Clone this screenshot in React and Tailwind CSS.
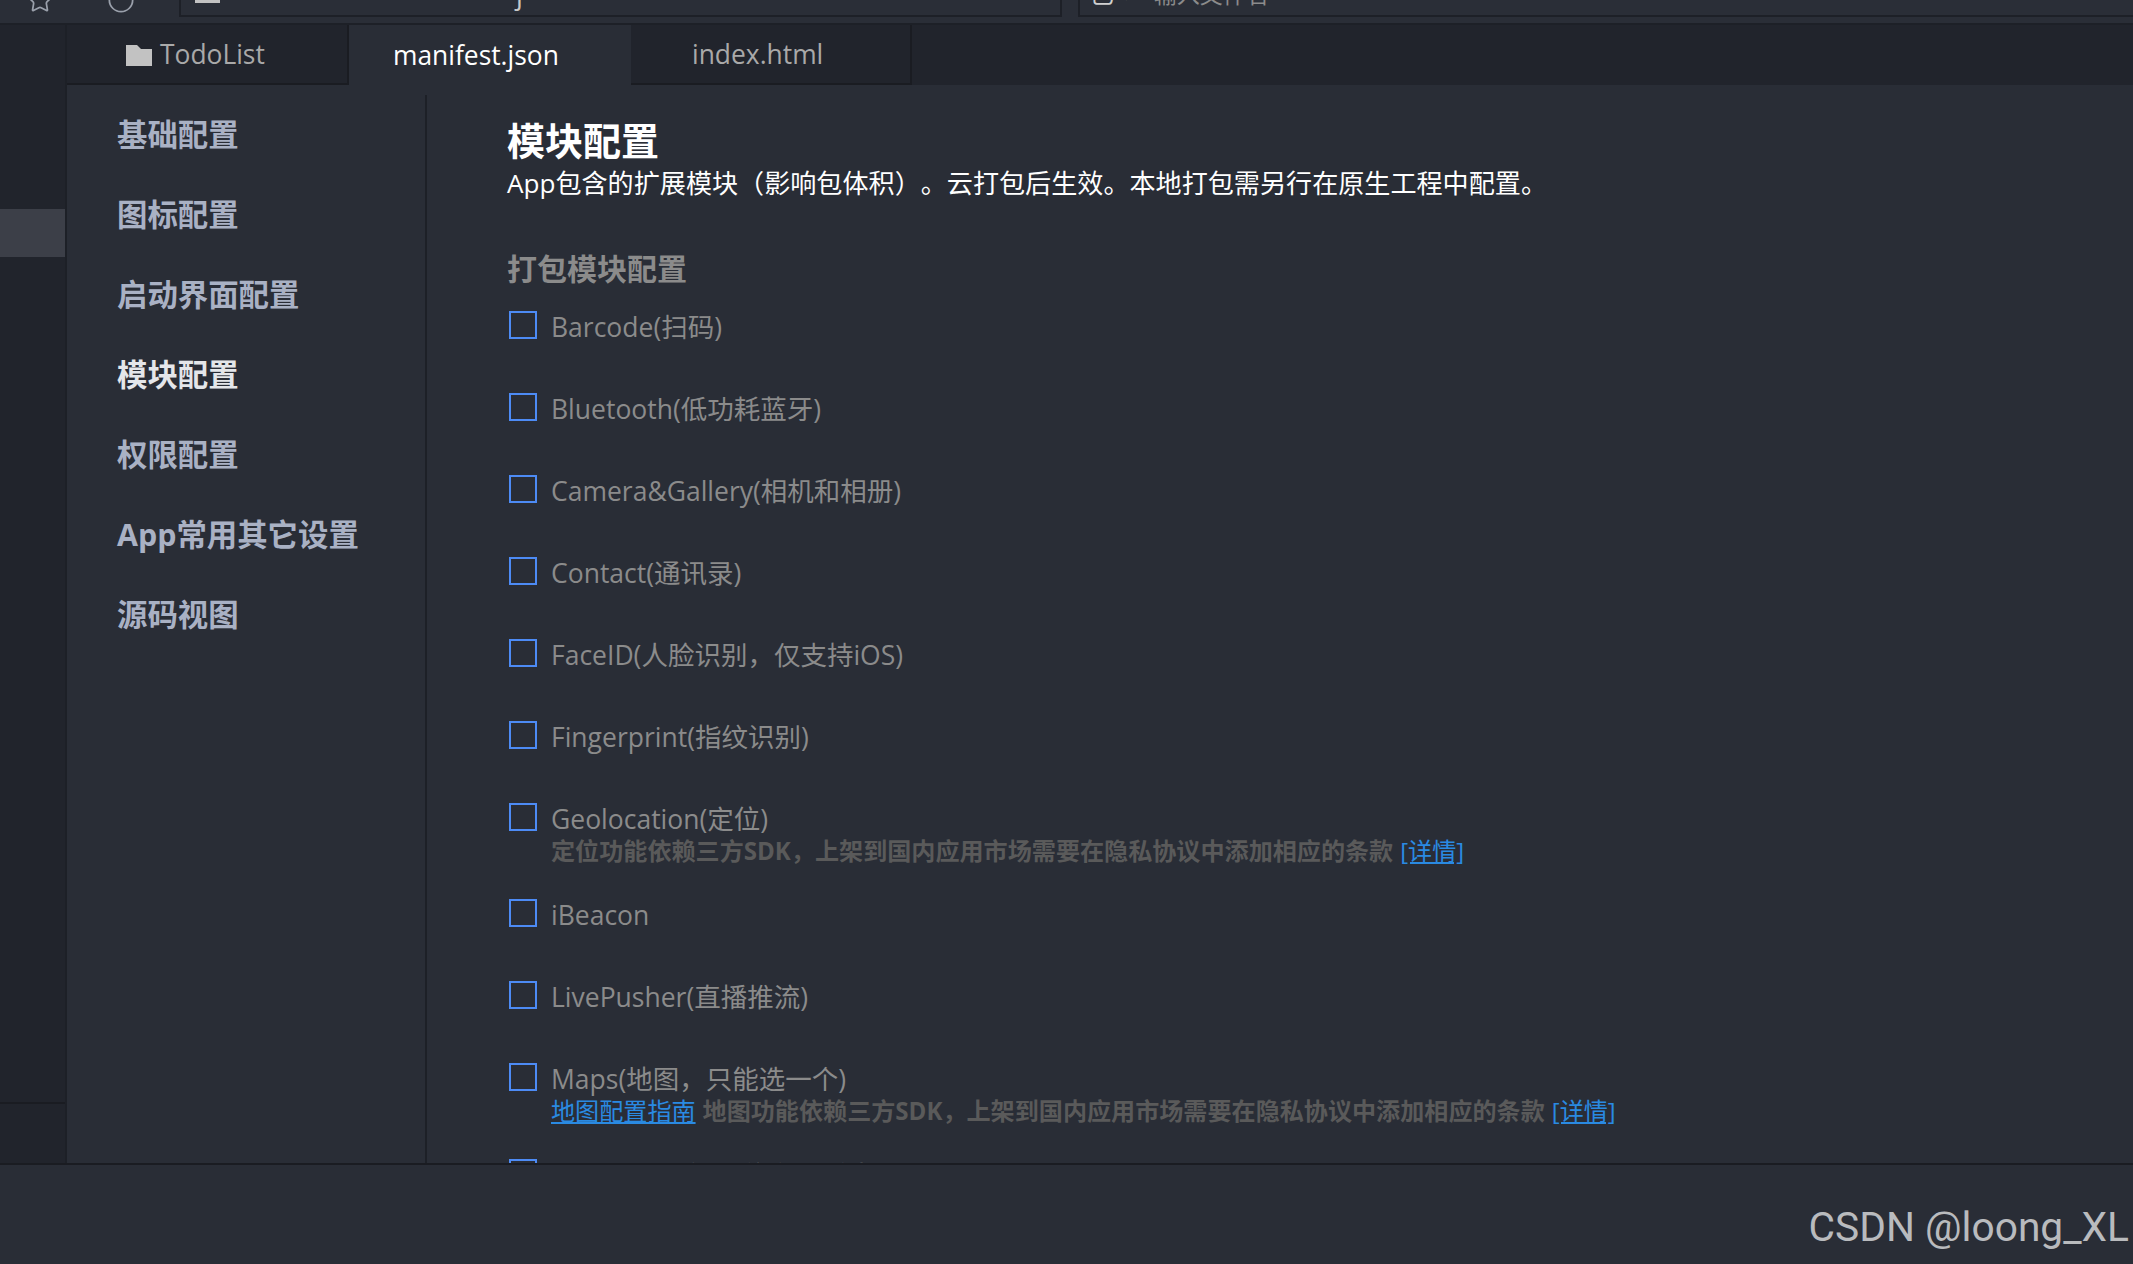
import { Star, Circle } from "lucide-react";

const modules = [
  { name: "Barcode(扫码)" },
  { name: "Bluetooth(低功耗蓝牙)" },
  { name: "Camera&Gallery(相机和相册)" },
  { name: "Contact(通讯录)" },
  { name: "FaceID(人脸识别，仅支持iOS)" },
  { name: "Fingerprint(指纹识别)" },
  { name: "Geolocation(定位)", note: "定位功能依赖三方SDK，上架到国内应用市场需要在隐私协议中添加相应的条款" },
  { name: "iBeacon" },
  { name: "LivePusher(直播推流)" },
  { name: "Maps(地图，只能选一个)", guide: "地图配置指南", note: "地图功能依赖三方SDK，上架到国内应用市场需要在隐私协议中添加相应的条款" },
  { name: "Messaging(短彩信和联系人)" },
];

const menu = ["基础配置", "图标配置", "启动界面配置", "模块配置", "权限配置", "App常用其它设置", "源码视图"];

function FolderIcon() {
  return (
    <svg width="26" height="21" viewBox="0 0 26 21" className="shrink-0">
      <path d="M0 0H11L15 4H26V21H0Z" fill="#c2c2c2" />
    </svg>
  );
}

function ModuleRow({ item }) {
  return (
    <div className={item.note ? "h-[96px]" : "h-[82px]"}>
      <div className="flex items-start ml-[2px]">
        <span className="w-[28px] h-[28px] border-2 border-[#4d8bf5] shrink-0"></span>
        <span className="ml-[14px] -mt-[2px] text-[26.5px] leading-[36px] text-[#8b8b8b]">{item.name}</span>
      </div>
      {item.note && (
        <p className="ml-[44px] -mt-[2px] text-[24.1px] leading-[32px] whitespace-nowrap font-bold text-[#5a5a5a]">
          {item.guide && <a className="font-normal text-[#2a8ae2] underline mr-[7px]">{item.guide}</a>}
          {item.note}
          <a className="font-normal text-[#2a8ae2] underline ml-[7px]">[详情]</a>
        </p>
      )}
    </div>
  );
}

export default function App() {
  return (
    <div className="h-[1264px] w-[2133px] overflow-hidden flex flex-col bg-[#292d36] font-['Open_Sans','Noto_Sans_CJK_SC',sans-serif] [text-spacing-trim:space-all]">
      {/* top bar, cut off by the crop */}
      <div className="h-[23px] shrink-0 flex overflow-hidden bg-[#2a2e37]">
        <div className="w-[179px] shrink-0 flex pl-[26px] gap-[53px] -mt-[14px] text-[#9aa0ab]">
          <Star size={28} strokeWidth={1.5} />
          <Circle size={28} strokeWidth={1.5} />
        </div>
        <div className="w-[883px] h-[17px] shrink-0 border-l-2 border-r-2 border-b-2 border-[#1d2027] flex overflow-hidden">
          <span className="ml-[14px] w-[25px] h-[3px] bg-[#c2c2c2]"></span>
          <span className="ml-[296px] -mt-[24px] text-[27px] leading-[36px] text-[#c8c8c8]">j</span>
        </div>
        <div className="ml-[16px] flex-1 h-[17px] border-l-2 border-b-2 border-[#1d2027] flex overflow-hidden">
          <span className="ml-[10px] -mt-[22px] text-[24px] leading-[32px] text-[#d0d0d0]">已&lt;</span>
          <span className="ml-[26px] -mt-[22px] text-[23px] leading-[32px] text-[#8b8b8b]">输入文件名</span>
        </div>
      </div>

      <div className="flex-1 min-h-0 flex border-t-2 border-[#1d2027]">
        {/* left strip */}
        <div className="w-[67px] shrink-0 flex flex-col bg-[#21242c] border-r-2 border-[#1d2027]">
          <div className="h-[48px] mt-[184px] bg-[#3c3f48]"></div>
          <div className="mt-[845px] border-t-2 border-[#1a1c22]"></div>
        </div>

        <div className="flex-1 min-w-0 flex flex-col">
          {/* tabs */}
          <div className="h-[60px] shrink-0 flex bg-[#21242c]">
            <div className="w-[282px] flex items-center pl-[59px] pt-[2px] gap-[8px] border-b-2 border-r-2 border-[#1a1c22] text-[26.4px] text-[#a9a9a9]">
              <FolderIcon />
              <span>TodoList</span>
            </div>
            <div className="w-[282px] flex items-center pl-[44px] pt-[2px] bg-[#292d36] text-[26.4px] text-white">manifest.json</div>
            <div className="w-[281px] flex items-center pl-[61px] pt-[2px] border-b-2 border-r-2 border-[#1a1c22] text-[26.4px] text-[#a9a9a9]">index.html</div>
            <div className="flex-1"></div>
          </div>

          <div className="flex-1 min-h-0 flex pt-[10px]">
            {/* settings menu */}
            <div className="w-[360px] shrink-0 pl-[50px] border-r-2 border-[#1d2027]">
              {menu.map((label) => (
                <div
                  key={label}
                  className={`h-[80px] flex items-center text-[30.4px] font-bold ${label === "模块配置" ? "text-[#e4e6ea]" : "text-[#a9b1c4]"}`}
                >
                  {label}
                </div>
              ))}
            </div>

            {/* module list */}
            <div className="flex-1 min-w-0 overflow-hidden pl-[80px] pt-[25px]">
              <h1 className="text-[38px] leading-[40px] font-bold text-white">模块配置</h1>
              <p className="text-[26.1px] leading-[36px] mt-[5px] text-white whitespace-nowrap">
                App包含的扩展模块（影响包体积）。云打包后生效。本地打包需另行在原生工程中配置。
              </p>
              <h2 className="mt-[48px] text-[30px] leading-[40px] font-bold text-[#8b8b8b]">打包模块配置</h2>
              <div className="mt-[22px]">
                {modules.map((item) => (
                  <ModuleRow key={item.name} item={item} />
                ))}
              </div>
            </div>
          </div>
        </div>
      </div>

      {/* bottom panel */}
      <div className="h-[101px] shrink-0 flex items-end justify-end border-t-2 border-[#1a1c22] bg-[#292d36] pr-[4px] pb-[12px]">
        <span className="text-[40.7px] leading-[50px] text-[#b9bbbe] font-['Roboto',sans-serif]">CSDN @loong_XL</span>
      </div>
    </div>
  );
}
